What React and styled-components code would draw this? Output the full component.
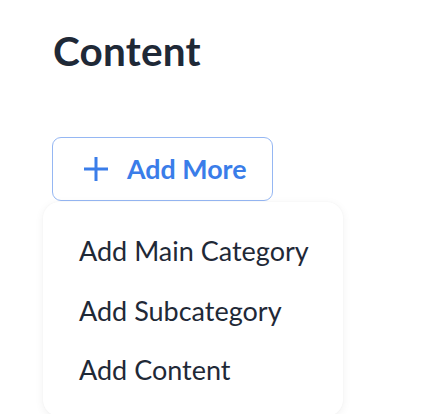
import React from "react";
import styled, { createGlobalStyle } from "styled-components";

const Global = createGlobalStyle`
  html, body { margin: 0; padding: 0; background: #ffffff; }
  body { font-family: "Lato", "Noto Sans", sans-serif; }
`;

const Page = styled.div`
  display: flex;
  flex-direction: column;
  align-items: flex-start;
  padding: 26px 0 0 53px;
  height: 414px;
  box-sizing: border-box;
  overflow: hidden;
`;

const Title = styled.h1`
  margin: 0;
  font-size: 40.5px;
  line-height: 50px;
  font-weight: 700;
  color: #1f2937;
  letter-spacing: 0.2px;
`;

const Dropdown = styled.div`
  position: relative;
  margin-top: 61px;
  margin-left: -1px;
`;

const AddButton = styled.button`
  display: flex;
  align-items: center;
  gap: 18px;
  height: 64px;
  width: 221px;
  padding: 0 0 0 30px;
  box-sizing: border-box;
  background: #ffffff;
  border: 1px solid #95b7f3;
  border-radius: 9px;
  color: #3a7de9;
  font-family: "Lato", "Noto Sans", sans-serif;
  font-size: 26.8px;
  font-weight: 700;
  cursor: pointer;
`;

const Menu = styled.ul`
  position: absolute;
  top: 65px;
  left: -9px;
  width: 300px;
  margin: 0;
  padding: 19px 0 16px;
  list-style: none;
  background: #ffffff;
  border-radius: 16px;
  box-shadow: 0 2px 10px rgba(0, 0, 0, 0.06), 0 0 2px rgba(0, 0, 0, 0.04);
`;

const Item = styled.li`
  padding: 0 0 0 36px;
  height: 59.5px;
  display: flex;
  align-items: center;
  font-size: 27px;
  color: #1f2937;
  white-space: nowrap;
`;

const PlusIcon = () => (
  <svg width="26" height="26" viewBox="0 0 26 26" fill="none">
    <path d="M13 1v24M1 13h24" stroke="#3a7de9" strokeWidth="3" />
  </svg>
);

export default function App() {
  return (
    <>
      <Global />
      <Page>
        <Title>Content</Title>
        <Dropdown>
          <AddButton>
            <PlusIcon />
            Add More
          </AddButton>
          <Menu>
            <Item>Add Main Category</Item>
            <Item>Add Subcategory</Item>
            <Item>Add Content</Item>
          </Menu>
        </Dropdown>
      </Page>
    </>
  );
}
